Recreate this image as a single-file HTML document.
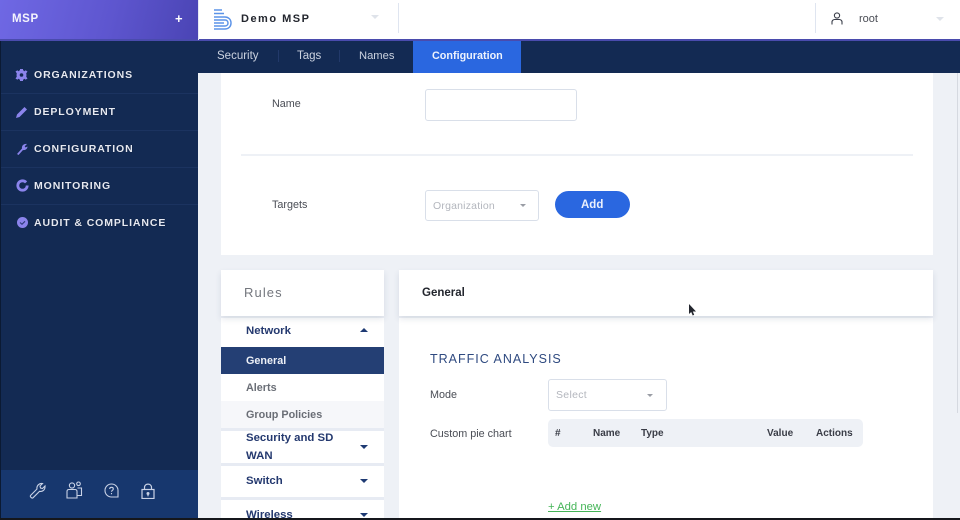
<!DOCTYPE html>
<html><head><meta charset="utf-8"><style>
html,body{margin:0;padding:0;background:#eef1f6}
#p{position:relative;width:960px;height:520px;overflow:hidden;background:#eef1f6;font-family:"Liberation Sans",sans-serif}
#p div,#p span.a,#p svg{position:absolute}
.t{white-space:nowrap;line-height:16px}
.nav{left:34px;color:#e6e9f2;font-size:10.5px;font-weight:bold;letter-spacing:.9px;text-shadow:0 0 1px #0008}
.sep{left:1px;width:197px;height:1px;background:#1b3360}
.tab{top:48px;color:#ccd3e0;font-size:11.5px}
.lab{color:#4a4d55;font-size:10.8px}
.box{background:#fff;border:1px solid #d9dfe9;border-radius:3px;box-sizing:border-box}
.card{background:#fff}
.shadow{box-shadow:0 3px 6px rgba(40,60,100,.12)}
.car{width:0;height:0;border-left:4px solid transparent;border-right:4px solid transparent;border-top:4px solid #1e3a73}
.grp{left:246px;color:#24396f;font-size:11.4px;font-weight:bold}
.it{left:246px;font-size:10.8px;font-weight:bold;color:#6a6e76}
.th{top:426px;color:#3a3d47;font-size:10px;font-weight:bold}
</style></head><body><div id="p">

<!-- main cards -->
<div class="card" style="left:221px;top:73px;width:712px;height:182px"></div>
<div style="left:241px;top:154px;width:672px;height:2px;background:#eef1f6"></div>
<div class="card" style="left:221px;top:318px;width:163px;height:202px"></div>
<div class="card" style="left:399px;top:318px;width:534px;height:202px"></div>

<!-- sidebar -->
<div style="left:0;top:40px;width:198px;height:430px;background:#132a53"></div>
<div style="left:0;top:470px;width:198px;height:50px;background:#17376e"></div>
<div style="left:0;top:40px;width:1px;height:480px;background:#0b1a33"></div>
<div style="left:0;top:0;width:198px;height:40px;background:linear-gradient(105deg,#6f68e4 0%,#5e56cf 55%,#4a44b4 100%)"></div>
<div class="t" style="left:12px;top:11px;color:#f4f4fc;font-size:11.5px;font-weight:bold;letter-spacing:.6px">MSP</div>
<div class="t" style="left:175px;top:11px;color:#fff;font-size:13px;font-weight:bold">+</div>

<div class="sep" style="top:93px"></div><div class="sep" style="top:130px"></div><div class="sep" style="top:167px"></div><div class="sep" style="top:204px"></div>
<div class="t nav" style="top:67px">ORGANIZATIONS</div>
<div class="t nav" style="top:104px">DEPLOYMENT</div>
<div class="t nav" style="top:141px">CONFIGURATION</div>
<div class="t nav" style="top:178px">MONITORING</div>
<div class="t nav" style="top:215px">AUDIT &amp; COMPLIANCE</div>

<svg style="left:15px;top:69px" width="13" height="12" viewBox="0 0 13 12"><path d="M6.5 6m-5 0a5 5 0 1 0 10 0a5 5 0 1 0-10 0" fill="#8b84ec"/><path d="M5 0h3v2H5zM5 10h3v2H5zM0.5 2.5l2-1.2 1.4 2-2 1.2zM12.5 2.5l-2-1.2-1.400 2 2 1.200zM.5 9.500l2 1.200 1.400-2-2-1.200zM12.500 9.500l-2 1.200-1.400-2 2-1.200z" fill="#8b84ec"/><circle cx="6.500" cy="6" r="1.800" fill="#132a53"/></svg>
<svg style="left:16px;top:106px" width="12" height="12" viewBox="0 0 12 12"><path d="M0 12l1-3.500L8.500 1l2.500 2.500L3.500 11z" fill="#8b84ec"/></svg>
<svg style="left:16px;top:143px" width="12" height="12" viewBox="0 0 12 12"><path d="M1 11L6 5.500C5.500 3 7.500 .5 11 1L8.700 3.200 9.500 4.500 11.500 3.500C11.500 6 9 7.500 7 7L2.500 12z" fill="#8b84ec"/></svg>
<svg style="left:16px;top:179px" width="13" height="13" viewBox="0 0 13 13"><circle cx="6.500" cy="6.500" r="4.700" fill="none" stroke="#8b84ec" stroke-width="2.800" stroke-dasharray="26 4"/></svg>
<svg style="left:16px;top:216px" width="13" height="13" viewBox="0 0 13 13"><circle cx="6.500" cy="6.500" r="5.500" fill="#8b84ec"/><path d="M4 6.500l2 1.800 3-3" fill="none" stroke="#2c3a78" stroke-width="1.100"/></svg>

<svg style="left:29px;top:482px" width="17" height="17" viewBox="0 0 17 17" fill="none" stroke="#c9d2e6" stroke-width="1.100"><path d="M1.500 13.500L8 7C7.300 4 10 1 13.500 1.500L11 4l.5 2 2 .5 2.500-2.500C16.300 8 13.300 10 10.500 9.300L4 15.800C3 16.700.7 14.800 1.500 13.500z"/></svg>
<svg style="left:66px;top:481px" width="17" height="18" viewBox="0 0 17 18" fill="none" stroke="#c9d2e6" stroke-width="1.100"><circle cx="6" cy="4.500" r="2.600"/><circle cx="12.500" cy="2.800" r="1.800"/><path d="M1 17V10.500C1 9 2 8.500 3 8.500H9C10 8.500 11 9 11 10.500V17zM11 14.500H15.500V7H11.500"/></svg>
<svg style="left:104px;top:483px" width="15" height="15" viewBox="0 0 15 15" fill="none" stroke="#c9d2e6" stroke-width="1.100"><path d="M7.500 1A6.500 6.500 0 0 1 14 7.500V14H7.500A6.500 6.500 0 0 1 7.500 1z"/><path d="M5.700 6C5.700 3.800 9.300 3.800 9.300 6C9.300 7.300 7.500 7.300 7.500 8.800M7.500 10v1.200"/></svg>
<svg style="left:141px;top:483px" width="14" height="16" viewBox="0 0 14 16" fill="none" stroke="#c9d2e6" stroke-width="1.200"><rect x="1" y="6.500" width="12" height="9"/><path d="M3.500 6.500V4.500C3.500 0 10.500 0 10.500 4.500V6.500"/><circle cx="7" cy="10.500" r="1.500" fill="#c9d2e6" stroke="none"/><path d="M7 11v2.300"/></svg>

<!-- header -->
<div style="left:198px;top:0;width:762px;height:39px;background:#fff"></div>
<div style="left:198px;top:39px;width:762px;height:1.500px;background:#4a4bad"></div>
<div style="left:0;top:39px;width:198px;height:2px;background:#4a4bad"></div>
<div style="left:198px;top:41px;width:762px;height:32px;background:#132a53"></div>
<div style="left:198px;top:0;width:1px;height:40px;background:#e6e9f4"></div>
<svg style="left:214px;top:9px" width="18" height="21" viewBox="0 0 18 21" fill="none" stroke="#5b93e8" stroke-width="1.500"><path d="M0 1h8M0 4.500h10M0 8h11C14 8 17 10 17 14S14 20 11 20H0M0 11h11C13 11 14 12.500 14 14S13 17 11 17H0M0 14h10"/></svg>
<div class="t" style="left:241px;top:11px;color:#23262e;font-size:11px;font-weight:bold;letter-spacing:1.5px">Demo MSP</div>
<div class="car" style="left:371px;top:15px;border-top-color:#dfe3ea"></div>
<div style="left:398px;top:3px;width:1px;height:30px;background:#dfe5f0"></div>
<div style="left:815px;top:3px;width:1px;height:30px;background:#dfe5f0"></div>
<svg style="left:831px;top:12px" width="12" height="13" viewBox="0 0 12 13" fill="none" stroke="#3b3f4a" stroke-width="1.100"><circle cx="6" cy="3.500" r="2.600"/><path d="M1 12.500V10C1 8.500 2.500 7.500 3.500 7.500H8.500C9.500 7.500 11 8.500 11 10V12.500"/></svg>
<div class="t" style="left:859px;top:11px;color:#4a4d55;font-size:11px">root</div>
<div class="car" style="left:936px;top:17px;border-top-color:#dfe3ea"></div>

<!-- tabs -->
<div class="t tab" style="left:217px">Security</div>
<div class="t tab" style="left:297px">Tags</div>
<div class="t tab" style="left:359px;font-size:11.2px">Names</div>
<div style="left:278px;top:50px;width:1px;height:12px;background:#22396a"></div>
<div style="left:339px;top:50px;width:1px;height:12px;background:#22396a"></div>
<div style="left:413px;top:41px;width:108px;height:32px;background:#2a67e0"></div>
<div class="t tab" style="left:432px;color:#eef3fd;font-weight:bold;font-size:10.8px">Configuration</div>

<!-- form -->
<div class="t lab" style="left:272px;top:96px">Name</div>
<div class="box" style="left:425px;top:89px;width:152px;height:32px"></div>
<div class="t lab" style="left:272px;top:197px">Targets</div>
<div class="box" style="left:425px;top:190px;width:114px;height:31px"></div>
<div class="t" style="left:433px;top:198px;color:#b3b6bd;font-size:10.500px;letter-spacing:.2px">Organization</div>
<div class="car" style="left:520px;top:204px;border-top-color:#9a9da5;border-top-width:3px;border-left-width:3px;border-right-width:3px"></div>
<div style="left:555px;top:191px;width:75px;height:27px;border-radius:14px;background:#2a67e0"></div>
<div class="t" style="left:581px;top:197px;color:#eaf0fd;font-size:11.5px;font-weight:bold">Add</div>

<!-- rules -->
<div class="card shadow" style="left:221px;top:270px;width:163px;height:46px"></div>
<div class="t" style="left:244px;top:285px;color:#74777e;font-size:13px;letter-spacing:1.100px">Rules</div>
<div class="t grp" style="top:323px">Network</div>
<div class="car" style="left:360px;top:328px;border-top:0;border-bottom:4px solid #1e3a73"></div>
<div style="left:221px;top:347px;width:163px;height:27px;background:#243f74"></div>
<div class="t it" style="top:353px;color:#eef1f7">General</div>
<div class="t it" style="top:380px">Alerts</div>
<div style="left:221px;top:401px;width:163px;height:27px;background:#f6f7fa"></div>
<div class="t it" style="top:407px">Group Policies</div>
<div style="left:221px;top:428px;width:163px;height:3px;background:#e7ebf3"></div>
<div class="t grp" style="top:430px">Security and SD</div>
<div class="t grp" style="top:448px">WAN</div>
<div class="car" style="left:360px;top:445px"></div>
<div style="left:221px;top:463px;width:163px;height:3px;background:#e7ebf3"></div>
<div class="t grp" style="top:473px">Switch</div>
<div class="car" style="left:360px;top:479px"></div>
<div style="left:221px;top:497px;width:163px;height:3px;background:#e7ebf3"></div>
<div class="t grp" style="top:507px">Wireless</div>
<div class="car" style="left:360px;top:513px"></div>

<!-- general -->
<div class="card shadow" style="left:399px;top:270px;width:534px;height:46px"></div>
<div class="t" style="left:422px;top:285px;color:#23262e;font-size:11.5px;font-weight:bold">General</div>
<svg style="left:688px;top:303px" width="9" height="14" viewBox="0 0 9 14"><path d="M1 1v10l2.200-2 1.500 3.500 1.500-.7L4.800 8.500H8z" fill="#23262e"/></svg>
<div class="t" style="left:430px;top:351px;color:#2f4a80;font-size:12.500px;letter-spacing:1px">TRAFFIC ANALYSIS</div>
<div class="t lab" style="left:430px;top:387px">Mode</div>
<div class="box" style="left:548px;top:379px;width:119px;height:32px"></div>
<div class="t" style="left:556px;top:387px;color:#b3b6bd;font-size:10.500px;letter-spacing:.3px">Select</div>
<div class="car" style="left:647px;top:394px;border-top-color:#9a9da5;border-top-width:3px;border-left-width:3px;border-right-width:3px"></div>
<div class="t lab" style="left:430px;top:426px">Custom pie chart</div>
<div style="left:548px;top:419px;width:315px;height:28px;border-radius:5px;background:#eef1f6"></div>
<div class="t th" style="left:555px">#</div>
<div class="t th" style="left:593px">Name</div>
<div class="t th" style="left:641px">Type</div>
<div class="t th" style="left:767px">Value</div>
<div class="t th" style="left:816px">Actions</div>
<div class="t" style="left:548px;top:499px;color:#45b558;font-size:11.3px;letter-spacing:0;text-decoration:underline">+ Add new</div>

<div style="left:957px;top:73px;width:1px;height:340px;background:#d5d9e0"></div>
<div style="left:0;top:518px;width:960px;height:2px;background:#15171c"></div>
</div></body></html>
